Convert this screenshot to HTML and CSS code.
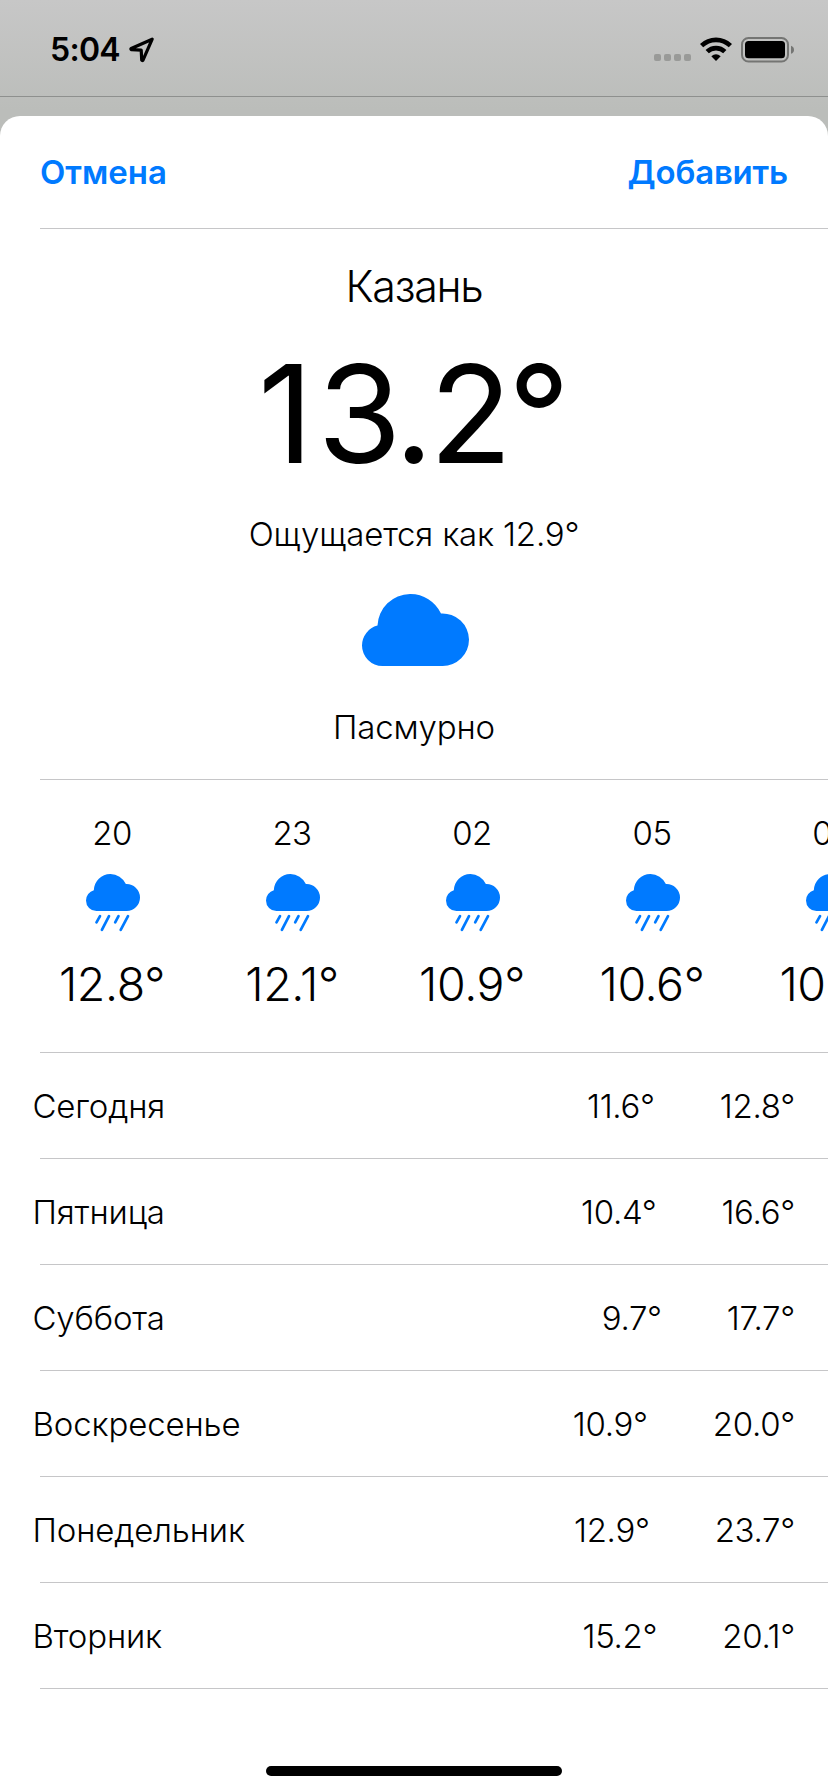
FILE: index.html
```html
<!DOCTYPE html>
<html lang="ru">
<head>
<meta charset="utf-8">
<title>Погода — Казань</title>
<link rel="stylesheet" href="styles.css">
</head>
<body>
<svg class="defs" aria-hidden="true">
  <symbol id="cloud" viewBox="0 0 107 72">
    <path d="M20.5 72A20.5 20.5 0 0 1 0 51.5A20.5 20.5 0 0 1 15.5 31.6A32.8 32.8 0 0 1 48 0A34 34 0 0 1 79 19.5A26.5 26.5 0 0 1 107 45.6A26.4 26.4 0 0 1 80.5 72Z" fill="currentColor"/>
  </symbol>
  <symbol id="rain" viewBox="0 0 54 58">
    <path transform="scale(.5047 .514)" d="M20.5 72A20.5 20.5 0 0 1 0 51.5A20.5 20.5 0 0 1 15.5 31.6A32.8 32.8 0 0 1 48 0A34 34 0 0 1 79 19.5A26.5 26.5 0 0 1 107 45.6A26.4 26.4 0 0 1 80.5 72Z" fill="currentColor"/>
    <path d="M14 42.1L10.5 48.3M23 42.1L15.9 55.8M32.5 42.1L29.2 48.3M42 42.1L34.7 55.8" fill="none" stroke="currentColor" stroke-width="2.7" stroke-linecap="round"/>
  </symbol>
</svg>
<div class="screen">
  <div class="status">
    <div class="status-left">
      <span class="time">5:04</span>
      <svg class="arrow" viewBox="0 0 26 26"><path d="M23.2 2.2L2.2 11.5Q1.4 12.3 2.5 12.7L12.2 13.2L12.7 23Q13.2 24 14 23.1Z" fill="none" stroke="#000" stroke-width="3.2" stroke-linejoin="round"/></svg>
    </div>
    <div class="status-right">
      <div class="dots"><i></i><i></i><i></i><i></i></div>
      <svg class="wifi" viewBox="0 0 32 24"><g fill="none" stroke="#000" stroke-width="4.6"><path d="M1.6 8.7A20.6 20.6 0 0 1 30.4 8.7"/><path d="M7.2 14.7A12.5 12.5 0 0 1 24.8 14.7"/></g><path d="M11.3 19.2Q16 15.2 20.7 19.2L16 24Z"/></svg>
      <svg class="battery" viewBox="0 0 54 26"><rect x="1" y="1" width="46" height="23.5" rx="6.5" fill="none" stroke="#747573" stroke-width="2"/><rect x="4" y="4" width="40" height="17.3" rx="3.5"/><path d="M50 8.7Q53 9.7 53 12.7Q53 15.7 50 16.7Z" fill="#747573"/></svg>
    </div>
  </div>
  <main class="sheet">
    <header class="bar"><span class="cancel">Отмена</span><span class="add">Добавить</span></header>
    <section class="current">
      <h1 class="city">Казань</h1>
      <div class="now"><span class="wide">1</span><span class="tight">3.2</span>°</div>
      <div class="feels">Ощущается как 12.9°</div>
      <svg class="big-cloud"><use href="#cloud"/></svg>
      <div class="cond">Пасмурно</div>
    </section>
    <section class="hours">
      <div class="hour"><span class="h">20</span><svg class="rain"><use href="#rain"/></svg><span class="t">12.8°</span></div>
      <div class="hour"><span class="h">23</span><svg class="rain"><use href="#rain"/></svg><span class="t">12.1°</span></div>
      <div class="hour"><span class="h">02</span><svg class="rain"><use href="#rain"/></svg><span class="t">10.9°</span></div>
      <div class="hour"><span class="h">05</span><svg class="rain"><use href="#rain"/></svg><span class="t">10.6°</span></div>
      <div class="hour"><span class="h">08</span><svg class="rain"><use href="#rain"/></svg><span class="t">10.8°</span></div>
    </section>
    <section class="days">
      <div class="day"><span class="name">Сегодня</span><span>11.6°</span><span>12.8°</span></div>
      <div class="day"><span class="name">Пятница</span><span>10.4°</span><span>16.6°</span></div>
      <div class="day"><span class="name">Суббота</span><span>9.7°</span><span>17.7°</span></div>
      <div class="day"><span class="name">Воскресенье</span><span>10.9°</span><span>20.0°</span></div>
      <div class="day"><span class="name">Понедельник</span><span>12.9°</span><span>23.7°</span></div>
      <div class="day"><span class="name">Вторник</span><span>15.2°</span><span>20.1°</span></div>
    </section>
    <div class="home"></div>
  </main>
</div>
</body>
</html>
```
FILE: styles.css
```css
* { box-sizing: border-box; }
body { margin: 0; background: #bbbdba; color: #000; font-family: Inter, "Noto Sans", sans-serif; font-size: 33px; font-weight: 300; }
svg { display: block; flex: none; }
.defs { position: absolute; width: 0; height: 0; }
.screen { width: 828px; height: 1792px; overflow: hidden; display: flex; flex-direction: column; background: linear-gradient(#c7c7c7, #bbbdba 110px); }
.status { height: 97px; margin-bottom: 19px; border-bottom: 1px solid #8e908e; display: flex; justify-content: space-between; padding: 0 33px 0 50px; }
.status-left { display: flex; height: 100px; align-items: center; gap: 9px; }
.time { font-size: 32px; font-weight: 600; line-height: 40px; letter-spacing: -.7px; }
.arrow { width: 26px; height: 26px; }
.status-right { display: flex; height: 62px; align-items: flex-end; }
.dots { display: flex; gap: 3px; margin: 0 9px 1px 0; }
.dots i { width: 7px; height: 7px; border-radius: 2px; background: #999a98; }
.wifi { width: 32px; height: 24px; margin: 0 9px 1px 0; }
.battery { width: 54px; height: 26px; margin-bottom: -1px; }
.sheet { flex: 1; background: #fff; border-radius: 20px 20px 0 0; display: flex; flex-direction: column; }
.bar { height: 113px; margin-left: 40px; padding-right: 40px; border-bottom: 1px solid #c6c6c8; display: flex; justify-content: space-between; line-height: 112px; font-weight: 600; color: #007aff; }
.add { letter-spacing: -.2px; }
.current { height: 551px; margin-left: 40px; padding: 27px 40px 0 0; border-bottom: 1px solid #c6c6c8; display: flex; flex-direction: column; align-items: center; }
.city { margin: 0; font-size: 43px; font-weight: 300; line-height: 61px; letter-spacing: -1.3px; }
.now { margin-top: 21px; font-size: 136px; font-weight: 400; line-height: 152px; }
.wide { letter-spacing: 4px; }
.tight { letter-spacing: -4.2px; }
.feels { margin-top: 24px; line-height: 40px; letter-spacing: -.2px; }
.big-cloud { width: 107px; height: 72px; margin: 40px 0 0 3px; color: #007aff; }
.cond { margin-top: 41px; line-height: 40px; letter-spacing: -.15px; }
.hours { height: 273px; margin-left: 40px; border-bottom: 1px solid #c6c6c8; display: flex; gap: 36px; overflow: hidden; }
.hour { flex: 0 0 144px; display: flex; flex-direction: column; align-items: center; }
.h { margin-top: 33px; line-height: 40px; letter-spacing: -.6px; }
.rain { width: 54px; height: 58px; margin: 21px 0 0 2px; color: #007aff; }
.t { margin-top: 24px; font-size: 46.5px; line-height: 56px; letter-spacing: -.4px; }
.day { height: 106px; display: flex; gap: 65px; padding: 0 33px 0 32.5px; line-height: 107px; letter-spacing: -.3px; background: linear-gradient(#c6c6c8, #c6c6c8) 40px 100% / 100% 1px no-repeat; }
.name { flex: 1; letter-spacing: -.15px; }
.home { width: 296px; height: 10px; margin: 77px auto 0; border-radius: 5px; background: #000; }
```
